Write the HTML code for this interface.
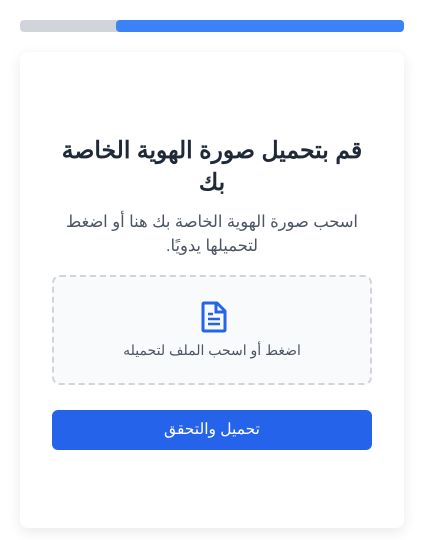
<!DOCTYPE html><html dir="rtl"><head><meta charset="utf-8"><style>
body{margin:0;background:#fff;width:422px;height:540px;font-family:"Liberation Sans","Noto Sans CJK SC",sans-serif;position:relative;overflow:hidden}
.bar{position:absolute;left:20px;top:20px;width:384px;height:12px;background:#d1d5db;border-radius:4px}
.fill{position:absolute;right:0;top:0;width:288px;height:12px;background:#3b82f6;border-radius:4px}
.card{position:absolute;left:20px;top:52px;width:384px;height:476px;background:#fff;border-radius:8px;box-shadow:0 4px 14px rgba(0,0,0,.09)}
h1{position:absolute;left:30px;right:30px;top:82px;margin:0;text-align:center;font-size:23.5px;line-height:32px;font-weight:bold;color:#1f2937}
p{position:absolute;left:30px;right:30px;top:158px;margin:0;text-align:center;font-size:16.3px;line-height:24px;color:#4b5563}
.dz{position:absolute;left:32px;top:223px;width:316px;height:106px;border:2px dashed #d1d5db;border-radius:8px;background:#f9fafb;text-align:center}
.dz svg{position:absolute;left:146px;top:24px}
.dz span{position:absolute;left:0;right:0;top:65px;font-size:14px;color:#4b5563}
.btn{position:absolute;left:32px;top:358px;width:320px;height:40px;background:#2563eb;border-radius:6px;color:#fff;text-align:center;line-height:40px;font-size:15.5px}
</style></head><body>
<div class="bar"><div class="fill"></div></div>
<div class="card">
<h1>قم بتحميل صورة الهوية الخاصة بك</h1>
<p>اسحب صورة الهوية الخاصة بك هنا أو اضغط لتحميلها يدويًا.</p>
<div class="dz"><svg width="28" height="32" viewBox="0 0 28 32"><path d="M4 2h13l8 8v19a1 1 0 0 1-1 1H4a1 1 0 0 1-1-1V3a1 1 0 0 1 1-1z" fill="none" stroke="#2563eb" stroke-width="3" stroke-linejoin="round"/><path d="M16 2v9h9" fill="none" stroke="#2563eb" stroke-width="3"/><path d="M8 13h5M8 18h12M8 23h12" stroke="#2563eb" stroke-width="2.5"/></svg><span>اضغط أو اسحب الملف لتحميله</span></div>
<div class="btn">تحميل والتحقق</div>
</div>
</body></html>
